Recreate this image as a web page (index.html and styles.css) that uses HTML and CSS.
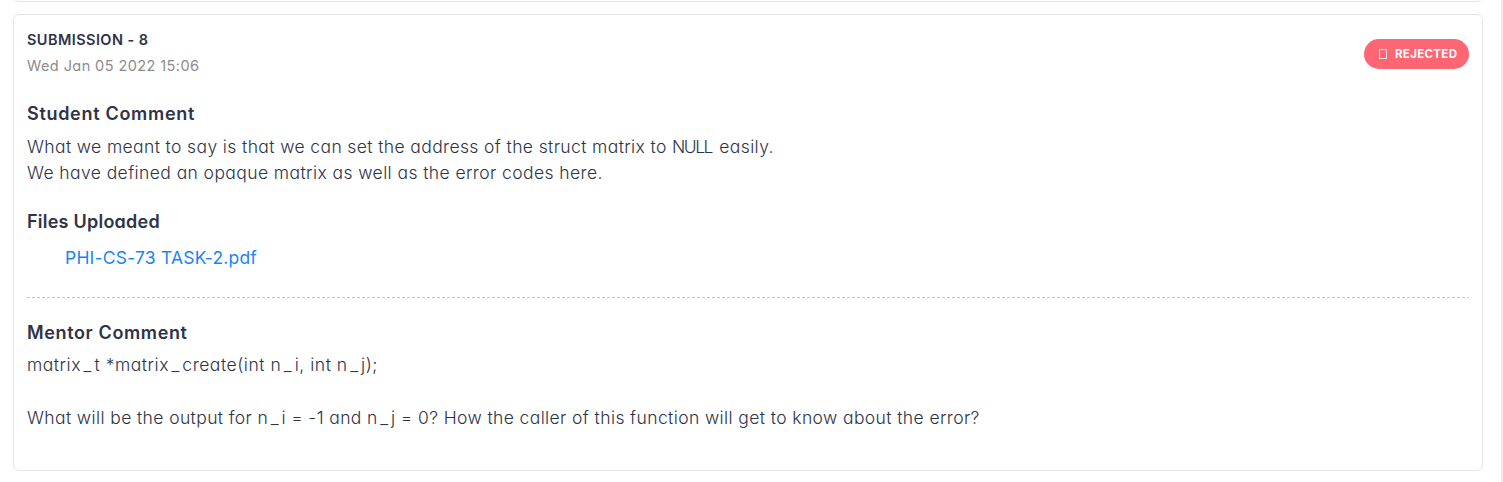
FILE: index.html
```
<!DOCTYPE html>
<html lang="en">
<head>
<meta charset="utf-8">
<title>Submissions</title>
<link rel="stylesheet" href="styles.css">
</head>
<body>
<main class="panel">
  <section class="card card-previous"></section>
  <section class="card">
    <header class="card-header">
      <div>
        <h2 class="title">SUBMISSION - 8</h2>
        <p class="date">Wed Jan 05 2022 15:06</p>
      </div>
      <div class="badge"><i class="glyph"></i><span>REJECTED</span></div>
    </header>
    <h3 class="heading heading-student">Student Comment</h3>
    <p class="comment"><span class="line-a">What we meant to say is that we can set the address of the struct matrix to <span class="caps">NULL</span> easily.</span><br><span class="line-b">We have defined an opaque matrix as well as the error codes here.</span></p>
    <h3 class="heading heading-files">Files Uploaded</h3>
    <a class="file">PHI-CS-73 TASK-2.pdf</a>
    <hr class="divider">
    <h3 class="heading heading-mentor">Mentor Comment</h3>
    <p class="comment mentor"><span class="line-c">matrix<span class="u">_</span>t *matrix<span class="u">_</span>create(int n<span class="u">_</span>i, int n<span class="u">_</span>j);</span><br><br><span class="line-d">What will be the output for n<span class="u">_</span>i = -1 and n<span class="u">_</span>j = 0? How the caller of this function will get to know about the error?</span></p>
  </section>
</main>
</body>
</html>
```
FILE: styles.css
```
* { box-sizing: border-box; }
body { margin: 0; background: #fff; color: #2e3347; font-family: Inter, "Open Sans", sans-serif; font-feature-settings: "cv11"; }
h2, h3, p { margin: 0; }
.panel { height: 482px; overflow: hidden; border-right: 2px solid #ebebf2; padding: 0 18px 0 13px; }
.card { height: 457px; border: 1px solid #e6e6e6; border-radius: 6px; padding: 13px; }
.card-previous { height: 20px; margin: -18px 0 12px; padding: 0; }
.card-header { display: flex; justify-content: space-between; height: 73px; }
.title { font-size: 14.5px; line-height: 24px; font-weight: 600; letter-spacing: .43px; }
.date { font-size: 14.5px; line-height: 24px; margin-top: 2px; color: #8c8c8c; letter-spacing: .42px; }
.badge { display: flex; align-items: center; gap: 8px; width: 105px; height: 30px; margin-top: 11px; padding-left: 15px; border-radius: 15px; background: #ff6673; color: #fff; font-size: 11.5px; font-weight: 700; letter-spacing: .32px; }
.glyph { width: 8px; height: 10px; border: 1px solid #ffe0e6; }
.heading { font-size: 18px; line-height: 26px; font-weight: 600; }
.heading-student { letter-spacing: .7px; }
.heading-files { margin-top: 23px; letter-spacing: .24px; }
.heading-mentor { letter-spacing: .63px; }
.comment { font-size: 17.5px; line-height: 26px; font-weight: 300; margin-top: 7px; }
.line-a { letter-spacing: .38px; }
.caps { letter-spacing: -1.5px; margin-right: 2px; }
.line-b { letter-spacing: .41px; }
.line-c { letter-spacing: .53px; }
.line-d { letter-spacing: .39px; }
.u { display: inline-block; padding: 0 2.5px; }
.file { display: block; margin: 10px 0 0 38px; font-size: 17.5px; line-height: 26px; color: #1b84f5; letter-spacing: .2px; }
.divider { border: 0; height: 1px; margin: 26px 0 22px; background: repeating-linear-gradient(90deg, #c6c6c6 0 3px, transparent 3px 5px); }
.mentor { margin-top: 6px; line-height: 26.5px; }
```
